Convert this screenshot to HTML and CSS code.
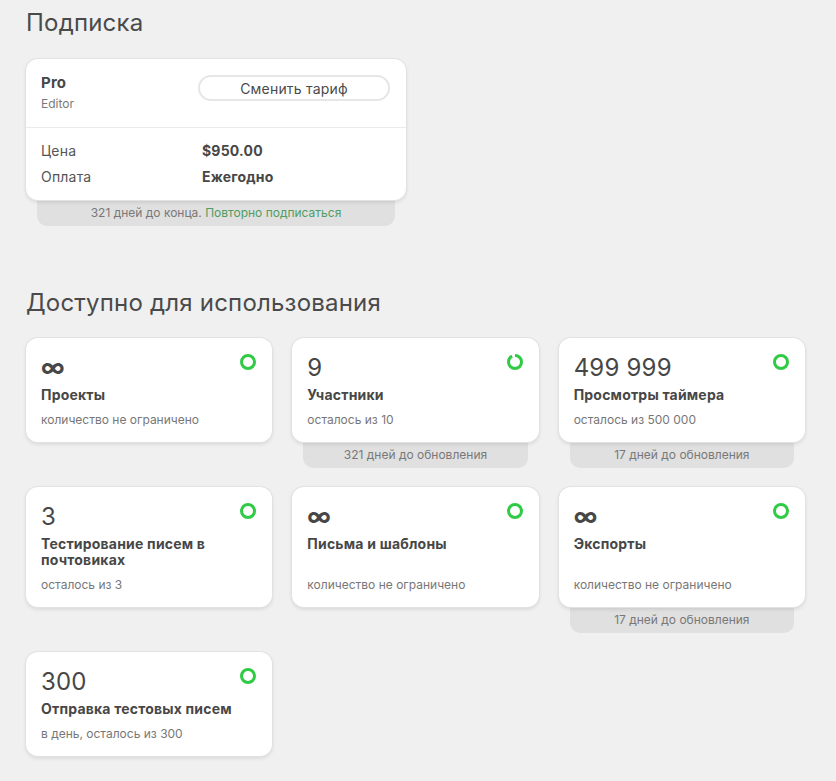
FILE: index.html
```html
<!DOCTYPE html>
<html lang="ru">
<head>
<meta charset="utf-8">
<link rel="stylesheet" href="styles.css">
</head>
<body>
<div class="page">
  <h1 class="heading">Подписка</h1>
  <div class="sub">
    <div class="sub-card">
      <div class="sub-top">
        <div class="plan">
          <div class="plan-name">Pro</div>
          <div class="plan-role">Editor</div>
        </div>
        <button class="btn">Сменить тариф</button>
      </div>
      <div class="sub-body">
        <div class="sub-row"><span class="sub-label">Цена</span><span class="sub-value">$950.00</span></div>
        <div class="sub-row"><span class="sub-label">Оплата</span><span class="sub-value">Ежегодно</span></div>
      </div>
    </div>
    <div class="tail">321 дней до конца. <span class="link">Повторно подписаться</span></div>
  </div>

  <h1 class="heading heading-2">Доступно для использования</h1>
  <div class="grid">
    <div class="cell">
      <div class="card">
        <div class="value inf">∞</div>
        <div class="title">Проекты</div>
        <div class="note">количество не ограничено</div>
        <svg class="ring" viewBox="0 0 16 16"><circle cx="8" cy="8" r="6.5" fill="none" stroke="#2fcb45" stroke-width="3"/></svg>
      </div>
      <div class="spacer"></div>
    </div>
    <div class="cell">
      <div class="card">
        <div class="value">9</div>
        <div class="title">Участники</div>
        <div class="note">осталось из 10</div>
        <svg class="ring" viewBox="0 0 16 16"><circle cx="8" cy="8" r="6.5" fill="none" stroke="#2fcb45" stroke-width="3" stroke-dasharray="36.76 40.84" transform="rotate(-90 8 8)"/></svg>
      </div>
      <div class="tail">321 дней до обновления</div>
    </div>
    <div class="cell">
      <div class="card">
        <div class="value">499 999</div>
        <div class="title">Просмотры таймера</div>
        <div class="note">осталось из 500 000</div>
        <svg class="ring" viewBox="0 0 16 16"><circle cx="8" cy="8" r="6.5" fill="none" stroke="#2fcb45" stroke-width="3"/></svg>
      </div>
      <div class="tail">17 дней до обновления</div>
    </div>

    <div class="cell">
      <div class="card">
        <div class="value">3</div>
        <div class="title">Тестирование писем в почтовиках</div>
        <div class="note">осталось из 3</div>
        <svg class="ring" viewBox="0 0 16 16"><circle cx="8" cy="8" r="6.5" fill="none" stroke="#2fcb45" stroke-width="3"/></svg>
      </div>
      <div class="spacer"></div>
    </div>
    <div class="cell">
      <div class="card">
        <div class="value inf">∞</div>
        <div class="title">Письма и шаблоны</div>
        <div class="note">количество не ограничено</div>
        <svg class="ring" viewBox="0 0 16 16"><circle cx="8" cy="8" r="6.5" fill="none" stroke="#2fcb45" stroke-width="3"/></svg>
      </div>
      <div class="spacer"></div>
    </div>
    <div class="cell">
      <div class="card">
        <div class="value inf">∞</div>
        <div class="title">Экспорты</div>
        <div class="note">количество не ограничено</div>
        <svg class="ring" viewBox="0 0 16 16"><circle cx="8" cy="8" r="6.5" fill="none" stroke="#2fcb45" stroke-width="3"/></svg>
      </div>
      <div class="tail">17 дней до обновления</div>
    </div>

    <div class="cell">
      <div class="card">
        <div class="value">300</div>
        <div class="title">Отправка тестовых писем</div>
        <div class="note">в день, осталось из 300</div>
        <svg class="ring" viewBox="0 0 16 16"><circle cx="8" cy="8" r="6.5" fill="none" stroke="#2fcb45" stroke-width="3"/></svg>
      </div>
    </div>
  </div>
</div>
</body>
</html>
```
FILE: styles.css
```css
* { box-sizing: border-box; }
html, body { margin: 0; padding: 0; }
body {
  background: #f0f0f0;
  font-family: Inter, "Noto Sans", "DejaVu Sans", sans-serif;
  color: #474747;
  letter-spacing: 0.2px;
}
.page {
  padding: 8px 31px 20px 26px;
}
.heading {
  margin: 0;
  font-size: 24px;
  line-height: 30px;
  font-weight: 400;
  color: #4a4a4a;
}
.heading-2 { margin-top: 62px; }

.sub { width: 380px; margin-top: 21px; display: flex; flex-direction: column; }
.sub-card {
  background: #fff;
  border-radius: 12px;
  box-shadow: 0 0 0 1px #e2e2e2, 0 2px 4px rgba(0,0,0,0.12);
  position: relative;
  z-index: 1;
}
.sub-top {
  display: flex;
  justify-content: space-between;
  align-items: flex-start;
  padding: 15px 16px 16px 15px;
  border-bottom: 1px solid #ebebeb;
}
.plan-name { font-size: 15px; line-height: 18px; font-weight: 700; color: #474747; }
.plan-role { font-size: 12px; line-height: 15px; color: #7a7a7a; margin-top: 4px; letter-spacing: 0; }
.btn {
  width: 192px;
  height: 26px;
  margin-top: 1px;
  border: 2px solid #e6e6e6;
  border-radius: 13px;
  background: #fff;
  font-family: inherit;
  font-size: 14px;
  letter-spacing: 0.2px;
  color: #4a4a4a;
  padding: 0;
}
.sub-body { padding: 14px 15px 14px 15px; display: flex; flex-direction: column; gap: 8px; }
.sub-row { display: flex; font-size: 14px; line-height: 18px; }
.sub-label { width: 161px; color: #555; }
.sub-value { font-weight: 700; color: #474747; }

.tail {
  margin: 0 11px;
  height: 26px;
  background: #e0e0e0;
  border-radius: 0 0 10px 10px;
  font-size: 12px;
  line-height: 26px;
  letter-spacing: 0;
  text-align: center;
  color: #787878;
}
.link { color: #4f9d62; }

.grid {
  margin-top: 20px;
  display: grid;
  grid-template-columns: repeat(3, 1fr);
  column-gap: 20px;
  row-gap: 19px;
}
.cell { display: flex; flex-direction: column; }
.spacer { height: 26px; }
.card {
  flex: 1;
  position: relative;
  background: #fff;
  border-radius: 12px;
  box-shadow: 0 0 0 1px #e2e2e2, 0 2px 4px rgba(0,0,0,0.12);
  padding: 15px 40px 15px 15px;
  display: flex;
  flex-direction: column;
}
.value { font-size: 24px; line-height: 30px; color: #474747; }
.value.inf { font-weight: 700; }
.title { font-size: 14px; line-height: 16px; font-weight: 700; color: #474747; margin-top: 4px; }
.note { font-size: 12px; line-height: 15px; letter-spacing: 0; color: #777; margin-top: auto; padding-top: 9px; }
.ring {
  position: absolute;
  top: 16px;
  right: 16px;
  width: 16px;
  height: 16px;
}
```
